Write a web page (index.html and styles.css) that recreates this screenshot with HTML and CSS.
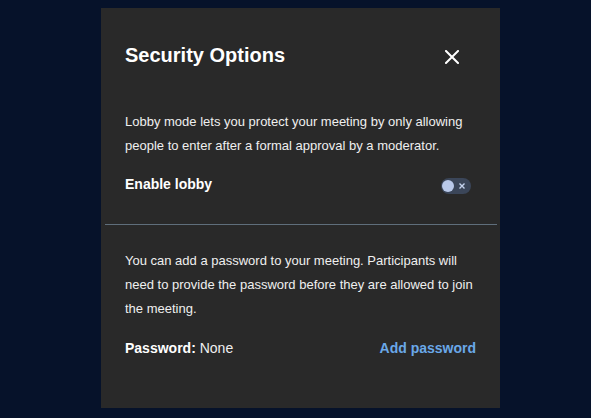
FILE: index.html
```html
<!DOCTYPE html>
<html>
<head>
<meta charset="utf-8">
<link rel="stylesheet" href="styles.css">
</head>
<body>
<div class="dialog">
  <div class="header">
    <h1 class="title">Security Options</h1>
    <button class="close" aria-label="Close">
      <svg width="14" height="14" viewBox="0 0 14 14"><path d="M1 1L13 13M13 1L1 13" stroke="#fff" stroke-width="2" stroke-linecap="square"/></svg>
    </button>
  </div>
  <div class="section">
    <p class="text">Lobby mode lets you protect your meeting by only allowing people to enter after a formal approval by a moderator.</p>
    <div class="row">
      <span class="label">Enable lobby</span>
      <span class="toggle">
        <span class="knob"></span>
        <svg class="toggle-x" width="6" height="6" viewBox="0 0 6 6"><path d="M0.5 0.5L5.5 5.5M5.5 0.5L0.5 5.5" stroke="#c5d3ee" stroke-width="1.4"/></svg>
      </span>
    </div>
  </div>
  <div class="divider"></div>
  <div class="section section-2">
    <p class="text">You can add a password to your meeting. Participants will need to provide the password before they are allowed to join the meeting.</p>
    <div class="row row-pass">
      <span><span class="label">Password:</span> None</span>
      <a class="link" href="#">Add password</a>
    </div>
  </div>
</div>
</body>
</html>
```

FILE: styles.css
```css
html, body {
  margin: 0;
  padding: 0;
}
body {
  background: #06122a;
  height: 418px;
  font-family: "Liberation Sans", Arial, sans-serif;
  color: #efefef;
  padding-top: 8px;
  box-sizing: border-box;
}
.dialog {
  margin-left: 101px;
  width: 399px;
  height: 400px;
  background: #292929;
  box-sizing: border-box;
  padding: 35px 0 0 0;
}
.header {
  display: flex;
  justify-content: space-between;
  align-items: center;
  padding: 0 41px 0 24px;
  height: 24px;
}
.title {
  margin: 0;
  font-size: 20px;
  line-height: 24px;
  font-weight: bold;
  color: #fff;
}
.close {
  background: none;
  border: 0;
  padding: 0;
  width: 14px;
  height: 14px;
  display: flex;
  margin-top: 3px;
}
.section {
  padding: 0 24px;
  margin-top: 43px;
}
.text {
  margin: 0;
  font-size: 13px;
  line-height: 24px;
}
.row {
  display: flex;
  justify-content: space-between;
  align-items: flex-start;
  font-size: 14px;
  line-height: 24px;
  margin-top: 14px;
}
.label {
  font-weight: bold;
  color: #fff;
}
.toggle {
  position: relative;
  width: 30px;
  height: 16px;
  border-radius: 8px;
  background: #3b4659;
  margin-top: 6px;
  margin-right: 5px;
}
.knob {
  position: absolute;
  left: 1px;
  top: 2px;
  width: 12px;
  height: 12px;
  border-radius: 50%;
  background: #b9c9e9;
}
.toggle-x {
  position: absolute;
  left: 18px;
  top: 5px;
}
.divider {
  height: 1px;
  background: #5f6e7b;
  margin: 28px 3px 0 4px;
}
.section-2 {
  margin-top: 24px;
}
.row-pass {
  margin-top: 15px;
}
.link {
  color: #6aa8e8;
  font-weight: bold;
  text-decoration: none;
}
```
